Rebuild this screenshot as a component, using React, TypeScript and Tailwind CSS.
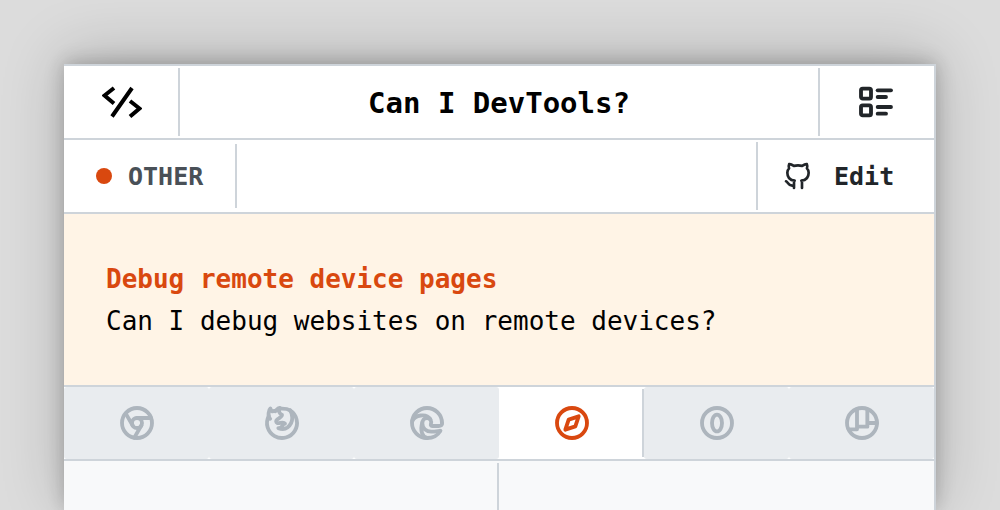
import type { ReactNode } from "react";
import { TbBrandChrome, TbBrandFirefox, TbBrandGithub, TbBrandSafari, TbListDetails } from "react-icons/tb";

function CodeLogo() {
  return (
    <svg viewBox="0 0 40 32" className="h-8 w-10" fill="none" stroke="currentColor" strokeWidth="4" aria-hidden="true">
      <path d="M12 2 2.500 9.500 12 17.500M30 2 10 30.500M28 15l9.500 7.500-9.500 8" />
    </svg>
  );
}

function LineIcon({ children }: { children: ReactNode }) {
  return (
    <svg
      viewBox="0 0 24 24"
      className="size-10"
      fill="none"
      stroke="currentColor"
      strokeWidth="2.3"
      strokeLinecap="round"
      strokeLinejoin="round"
      aria-hidden="true"
    >
      {children}
    </svg>
  );
}

type Browser = { name: string; icon: ReactNode; active?: boolean };

const browsers: Browser[] = [
  { name: "Chrome", icon: <TbBrandChrome strokeWidth={2.3} className="size-10" /> },
  { name: "Firefox", icon: <TbBrandFirefox strokeWidth={2.3} className="size-10" /> },
  {
    name: "Edge",
    icon: (
      <LineIcon>
        <path d="M21 12A9 9 0 1 0 12 21c3.700 0 6.600-1.800 8-4.300" />
        <path d="M21 12c.2 1.300-.6 1.800-2 1.800h-3.600c-.9 0-1.300-.3-1.100-1 .7-2-.3-3.800-2.300-3.800-1.700 0-2.800 1.200-2.800 3.200 0 3 2.300 5 5.300 5 2.200 0 3.700-.3 5.500-.5" />
        <path d="M3.200 10.900c1.400-3.700 8.400-5 10.800-1.200" />
        <path d="M12 21c-2.900-.6-4.200-4.600-2.900-9" />
      </LineIcon>
    ),
  },
  { name: "Safari", icon: <TbBrandSafari strokeWidth={2.3} className="size-10" />, active: true },
  {
    name: "Opera",
    icon: (
      <LineIcon>
        <circle cx="12" cy="12" r="9" />
        <ellipse cx="12" cy="12" rx="3" ry="5" />
      </LineIcon>
    ),
  },
  {
    name: "Polypane",
    icon: (
      <LineIcon>
        <circle cx="12" cy="12" r="9" />
        <path d="M9 4v11.800H4M9 14.200h6.200V4M15.200 12H21" />
      </LineIcon>
    ),
  },
];

export default function App() {
  return (
    <div className="flex min-h-screen flex-col overflow-hidden bg-[#dcdcdc] px-16 pt-16 font-['DejaVu_Sans_Mono',monospace] text-[25px] leading-10 text-black">
      <main className="flex grow flex-col border-t-2 border-r-2 border-[#ced4da] bg-white shadow-[0_-8px_60px_rgba(0,0,0,0.2),0_-2px_18px_rgba(0,0,0,0.22)]">
        <header className="flex h-[74px] border-b-2 border-[#ced4da]">
          <a href="#home" aria-label="Home" className="my-0.5 flex w-[116px] items-center justify-center border-r-2 border-[#ced4da] pl-0.5">
            <CodeLogo />
          </a>
          <h1 className="flex grow items-center justify-center pt-0.5 text-[29px] font-bold">Can I DevTools?</h1>
          <button type="button" aria-label="All features" className="my-0.5 flex w-[116px] items-center justify-center border-l-2 border-[#ced4da] pr-0.5 text-[#212529]">
            <TbListDetails strokeWidth={2.3} className="size-10" />
          </button>
        </header>

        <div className="flex h-[74px] justify-between border-b-2 border-[#ced4da]">
          <div className="my-1 flex items-center gap-4 border-r-2 border-[#ced4da] px-8 font-bold text-[#495057]">
            <span className="size-4 rounded-full bg-[#d9480f]" />
            <span className="pt-0.5">OTHER</span>
          </div>
          <a href="#edit" className="my-0.5 flex w-[178px] items-center gap-5 border-l-2 border-[#ced4da] pl-6 font-bold text-[#212529]">
            <TbBrandGithub className="size-8" />
            <span className="pt-0.5">Edit</span>
          </a>
        </div>

        <section className="border-b-2 border-[#ced4da] bg-[#fff4e6] px-[42px] pt-11 pb-[43px] text-[26px] leading-[42px]">
          <h2 className="font-bold text-[#d9480f]">Debug remote device pages</h2>
          <p>Can I debug websites on remote devices?</p>
        </section>

        <nav aria-label="Browsers" className="grid h-[74px] grid-cols-6 border-b-2 border-[#ced4da]">
          {browsers.map((browser) => (
            <button
              key={browser.name}
              type="button"
              aria-label={browser.name}
              aria-pressed={!!browser.active}
              className={
                browser.active
                  ? "my-0.5 flex items-center justify-center border-r-2 border-[#ced4da] bg-white pl-0.5 text-[#d9480f]"
                  : "flex items-center justify-center rounded-[3px] bg-[#e9ecef] text-[#adb5bd]"
              }
            >
              {browser.icon}
            </button>
          ))}
        </nav>

        <div className="grid grow grid-cols-2 bg-[#f8f9fa]">
          <div className="mt-0.5 border-r-2 border-[#ced4da]" />
          <div />
        </div>
      </main>
    </div>
  );
}
